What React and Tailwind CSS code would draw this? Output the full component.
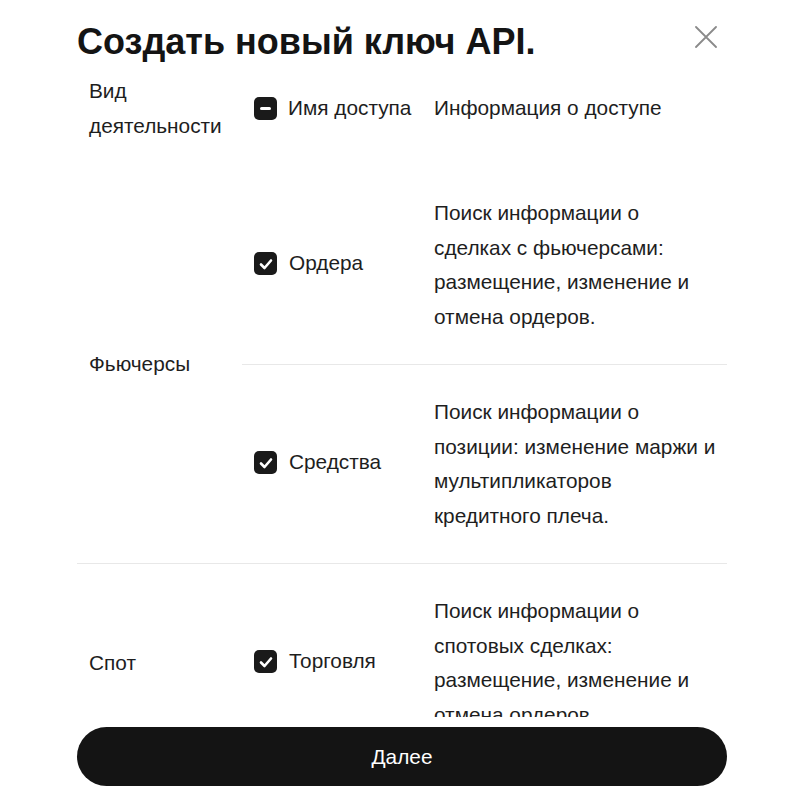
import React from 'react';

function Check({ state = 'checked' }) {
  return (
    <span className="w-[23px] h-[23px] shrink-0 rounded-[5px] bg-[#1a1a1a] flex items-center justify-center">
      {state === 'checked' ? (
        <svg width="16" height="16" viewBox="0 0 16 16" fill="none">
          <path d="M3 8.5 L6.5 12 L13 4.5" stroke="#fff" strokeWidth="2.6" strokeLinecap="round" strokeLinejoin="round" />
        </svg>
      ) : (
        <span className="w-[11px] h-[3px] rounded-full bg-white" />
      )}
    </span>
  );
}

function Perm({ name, info, border }) {
  return (
    <div className={`grid grid-cols-[180px_1fr] items-center py-[30px] ${border ? 'border-t border-[#e8e8e8]' : ''}`}>
      <div className="flex items-center gap-3 px-3 -mt-[3px]">
        <Check />
        <span className="whitespace-nowrap">{name}</span>
      </div>
      <p className="pl-3 pr-2">{info}</p>
    </div>
  );
}

export default function App() {
  return (
    <div
      className="h-screen bg-white flex flex-col pl-[77px] pr-[73px] text-[#1e1e1e]"
      style={{ fontFamily: '"Liberation Sans", Arial, sans-serif' }}
    >
      {/* заголовок */}
      <div className="flex justify-between items-start pt-[18px] pb-[8px]">
        <h1 className="text-[36px] leading-[48px] font-bold text-[#141414]">Создать новый ключ API.</h1>
        <button className="mt-[8px] mr-[10px] text-[#8a8a8a]">
          <svg width="22" height="22" viewBox="0 0 22 22" fill="none">
            <path d="M1 1 L21 21 M21 1 L1 21" stroke="currentColor" strokeWidth="1.8" strokeLinecap="round" />
          </svg>
        </button>
      </div>

      {/* таблица прав */}
      <div className="flex-1 overflow-hidden text-[20.8px] leading-[34.5px]">
        <div className="grid grid-cols-[165px_180px_1fr] items-center pb-[23px]">
          <div className="px-3">Вид деятельности</div>
          <div className="flex items-center gap-[11px] px-3">
            <Check state="some" />
            <span className="whitespace-nowrap">Имя доступа</span>
          </div>
          <div className="px-3">Информация о доступе</div>
        </div>

        <div className="grid grid-cols-[165px_1fr] items-center">
          <div className="px-3">Фьючерсы</div>
          <div>
            <Perm name="Ордера" info="Поиск информации о сделках с фьючерсами: размещение, изменение и отмена ордеров." />
            <Perm border name="Средства" info="Поиск информации о позиции: изменение маржи и мультипликаторов кредитного плеча." />
          </div>
        </div>

        <div className="grid grid-cols-[165px_1fr] items-center border-t border-[#e8e8e8]">
          <div className="px-3">Спот</div>
          <div>
            <Perm name="Торговля" info="Поиск информации о спотовых сделках: размещение, изменение и отмена ордеров." />
          </div>
        </div>
      </div>

      <button className="mt-[10px] mb-[14px] h-[59px] shrink-0 rounded-full bg-[#141414] text-white text-[20.8px]">
        Далее
      </button>
    </div>
  );
}
